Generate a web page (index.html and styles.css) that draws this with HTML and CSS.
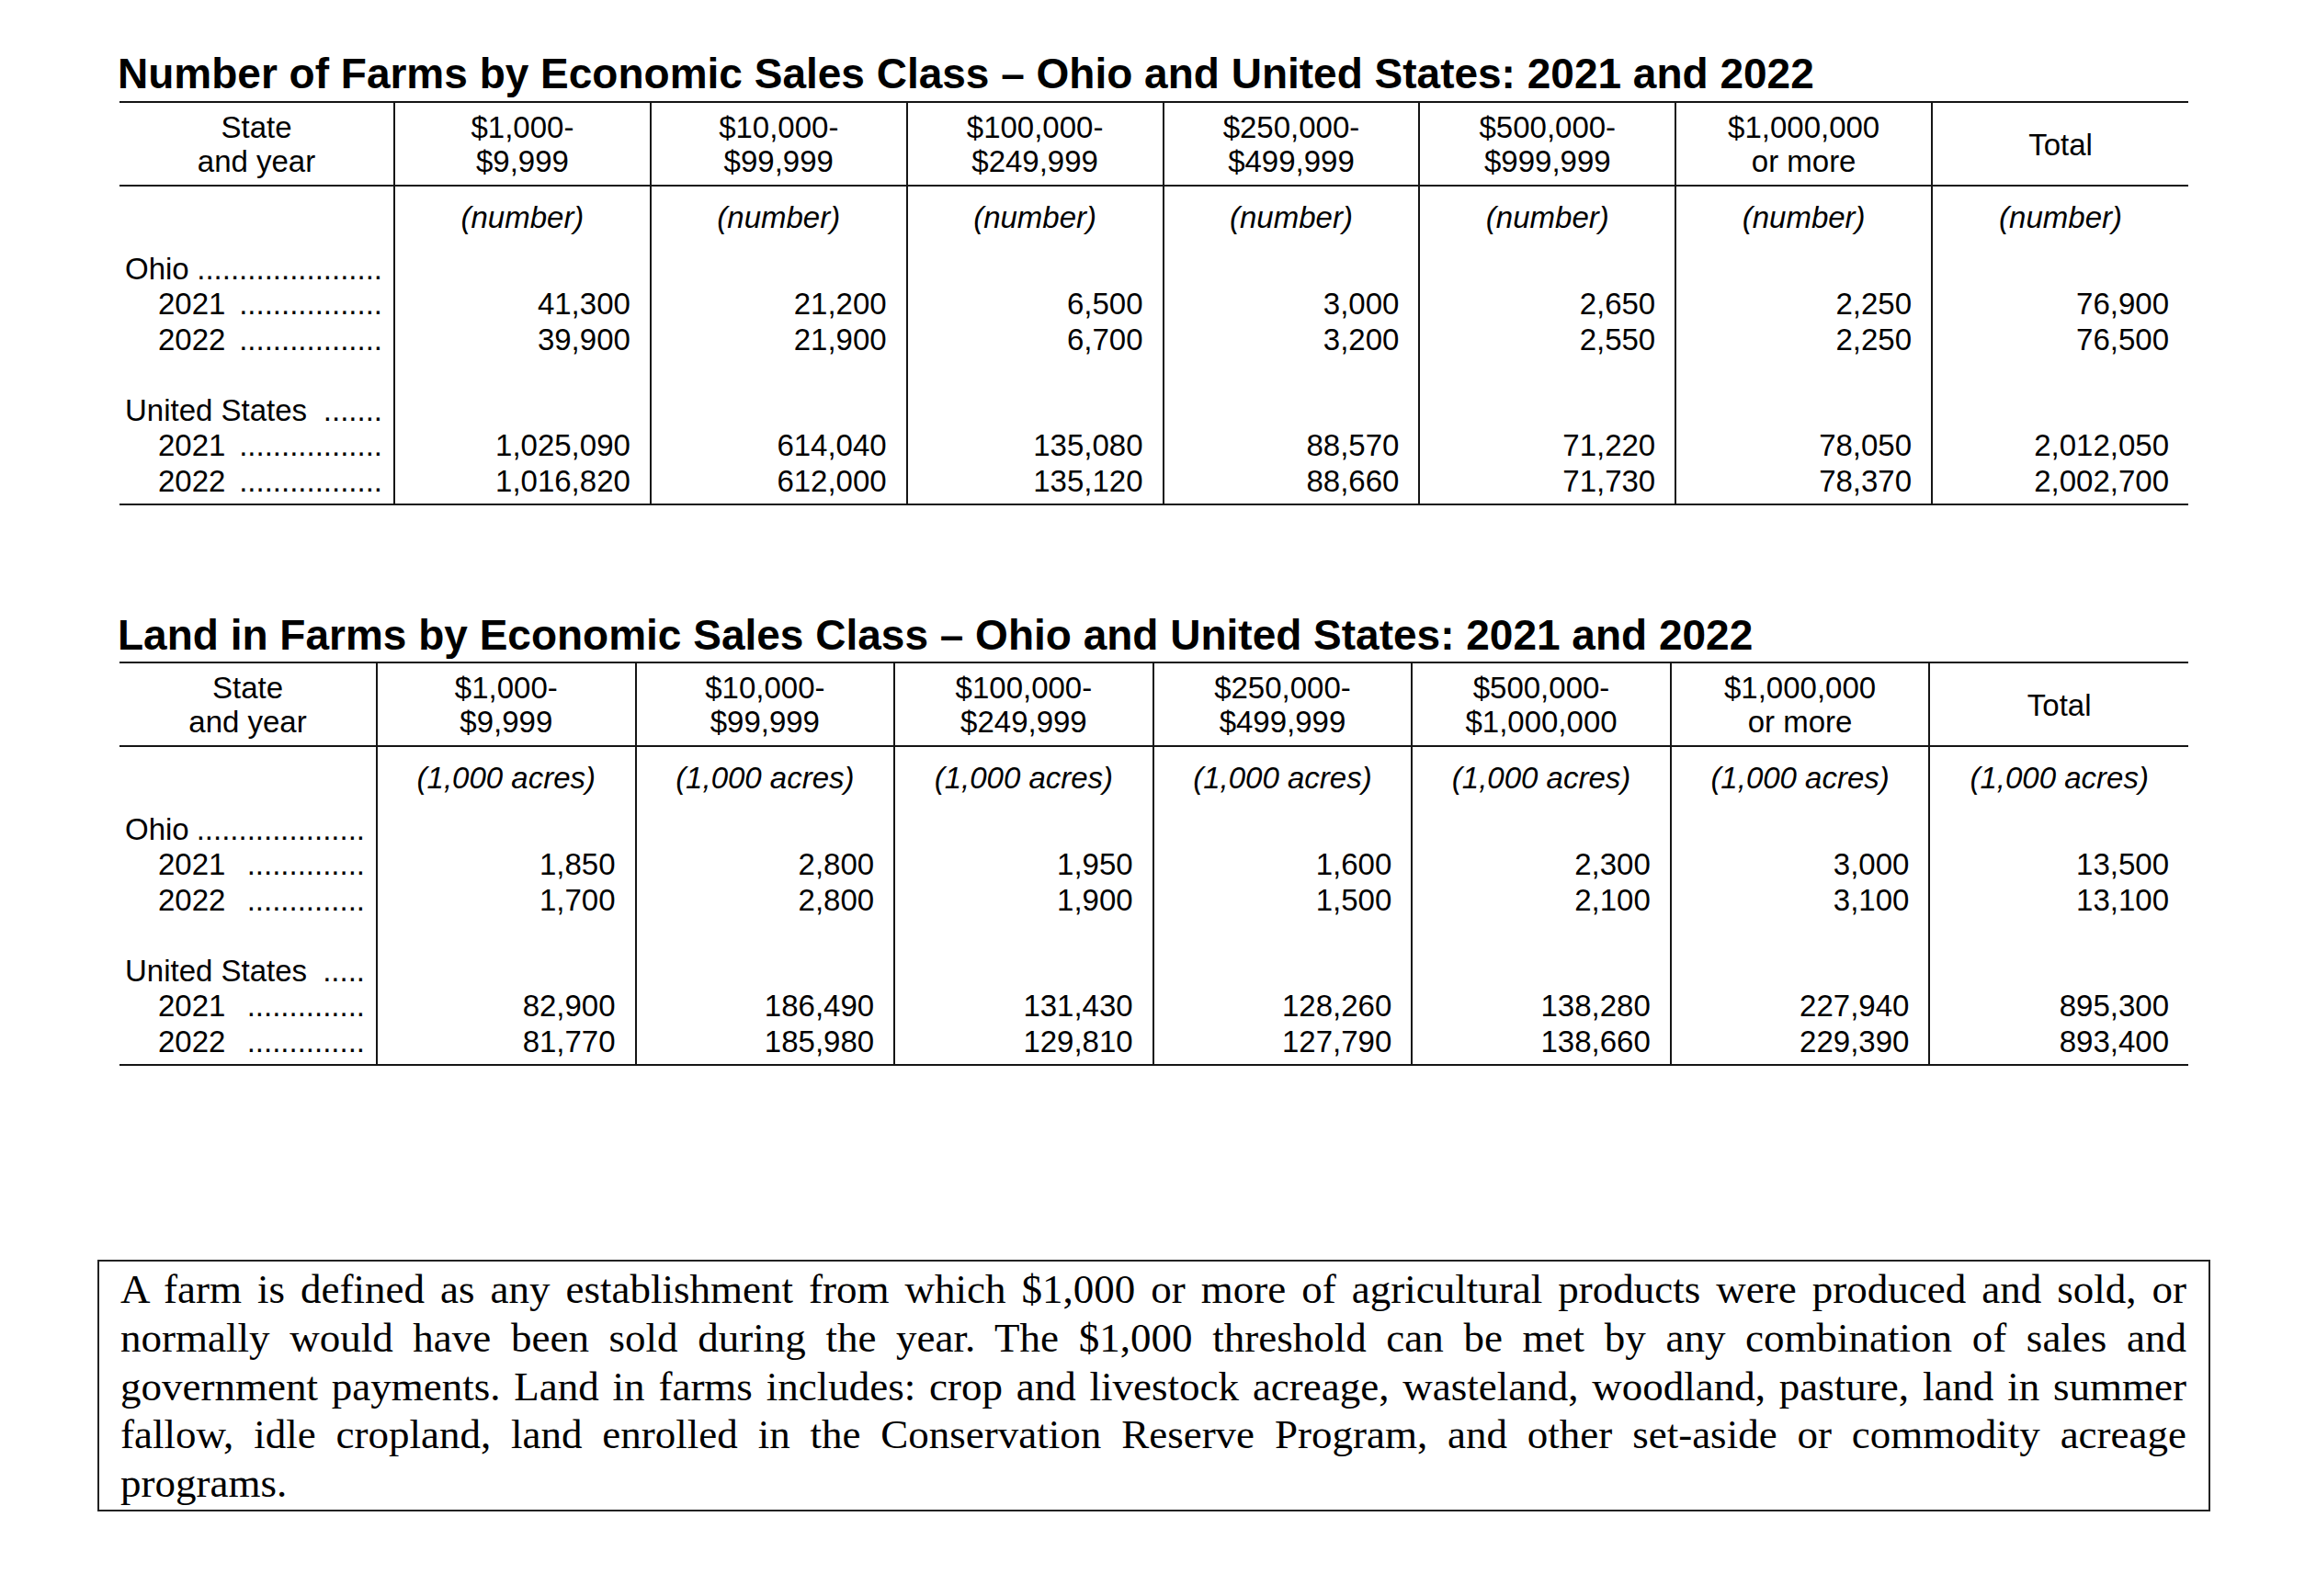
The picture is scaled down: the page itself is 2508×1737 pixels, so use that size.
FILE: index.html
```html
<!DOCTYPE html>
<html lang="en">
<head>
<meta charset="utf-8">
<title>Farms by Economic Sales Class – Ohio and United States</title>
<link rel="stylesheet" href="styles.css">
</head>
<body>
<main class="page">
  <h1 class="title">Number of Farms by Economic Sales Class – Ohio and United States: 2021 and 2022</h1>
  <table class="stats stats-farms">
    <colgroup><col class="col-label"><col><col><col><col><col><col><col></colgroup>
    <thead>
      <tr>
        <th>State<br>and year</th>
        <th>$1,000-<br>$9,999</th>
        <th>$10,000-<br>$99,999</th>
        <th>$100,000-<br>$249,999</th>
        <th>$250,000-<br>$499,999</th>
        <th>$500,000-<br>$999,999</th>
        <th>$1,000,000<br>or more</th>
        <th>Total</th>
      </tr>
    </thead>
    <tbody>
      <tr class="units"><td></td><td>(number)</td><td>(number)</td><td>(number)</td><td>(number)</td><td>(number)</td><td>(number)</td><td>(number)</td></tr>
      <tr><td class="lbl"><div class="lead"><span>Ohio</span><span class="dots">......................</span></div></td><td></td><td></td><td></td><td></td><td></td><td></td><td></td></tr>
      <tr><td class="lbl"><div class="lead yr"><span>2021</span><span class="dots">.................</span></div></td><td>41,300</td><td>21,200</td><td>6,500</td><td>3,000</td><td>2,650</td><td>2,250</td><td>76,900</td></tr>
      <tr><td class="lbl"><div class="lead yr"><span>2022</span><span class="dots">.................</span></div></td><td>39,900</td><td>21,900</td><td>6,700</td><td>3,200</td><td>2,550</td><td>2,250</td><td>76,500</td></tr>
      <tr><td></td><td></td><td></td><td></td><td></td><td></td><td></td><td></td></tr>
      <tr><td class="lbl"><div class="lead"><span>United States</span><span class="dots">.......</span></div></td><td></td><td></td><td></td><td></td><td></td><td></td><td></td></tr>
      <tr><td class="lbl"><div class="lead yr"><span>2021</span><span class="dots">.................</span></div></td><td>1,025,090</td><td>614,040</td><td>135,080</td><td>88,570</td><td>71,220</td><td>78,050</td><td>2,012,050</td></tr>
      <tr class="last"><td class="lbl"><div class="lead yr"><span>2022</span><span class="dots">.................</span></div></td><td>1,016,820</td><td>612,000</td><td>135,120</td><td>88,660</td><td>71,730</td><td>78,370</td><td>2,002,700</td></tr>
    </tbody>
  </table>

  <h1 class="title title-second">Land in Farms by Economic Sales Class – Ohio and United States: 2021 and 2022</h1>
  <table class="stats stats-land">
    <colgroup><col class="col-label"><col><col><col><col><col><col><col></colgroup>
    <thead>
      <tr>
        <th>State<br>and year</th>
        <th>$1,000-<br>$9,999</th>
        <th>$10,000-<br>$99,999</th>
        <th>$100,000-<br>$249,999</th>
        <th>$250,000-<br>$499,999</th>
        <th>$500,000-<br>$1,000,000</th>
        <th>$1,000,000<br>or more</th>
        <th>Total</th>
      </tr>
    </thead>
    <tbody>
      <tr class="units"><td></td><td>(1,000 acres)</td><td>(1,000 acres)</td><td>(1,000 acres)</td><td>(1,000 acres)</td><td>(1,000 acres)</td><td>(1,000 acres)</td><td>(1,000 acres)</td></tr>
      <tr><td class="lbl"><div class="lead"><span>Ohio</span><span class="dots">....................</span></div></td><td></td><td></td><td></td><td></td><td></td><td></td><td></td></tr>
      <tr><td class="lbl"><div class="lead yr"><span>2021</span><span class="dots">..............</span></div></td><td>1,850</td><td>2,800</td><td>1,950</td><td>1,600</td><td>2,300</td><td>3,000</td><td>13,500</td></tr>
      <tr><td class="lbl"><div class="lead yr"><span>2022</span><span class="dots">..............</span></div></td><td>1,700</td><td>2,800</td><td>1,900</td><td>1,500</td><td>2,100</td><td>3,100</td><td>13,100</td></tr>
      <tr><td></td><td></td><td></td><td></td><td></td><td></td><td></td><td></td></tr>
      <tr><td class="lbl"><div class="lead"><span>United States</span><span class="dots">.....</span></div></td><td></td><td></td><td></td><td></td><td></td><td></td><td></td></tr>
      <tr><td class="lbl"><div class="lead yr"><span>2021</span><span class="dots">..............</span></div></td><td>82,900</td><td>186,490</td><td>131,430</td><td>128,260</td><td>138,280</td><td>227,940</td><td>895,300</td></tr>
      <tr class="last"><td class="lbl"><div class="lead yr"><span>2022</span><span class="dots">..............</span></div></td><td>81,770</td><td>185,980</td><td>129,810</td><td>127,790</td><td>138,660</td><td>229,390</td><td>893,400</td></tr>
    </tbody>
  </table>

  <p class="note">A farm is defined as any establishment from which $1,000 or more of agricultural products were produced and sold, or normally would have been sold during the year. The $1,000 threshold can be met by any combination of sales and government payments. Land in farms includes: crop and livestock acreage, wasteland, woodland, pasture, land in summer fallow, idle cropland, land enrolled in the Conservation Reserve Program, and other set-aside or commodity acreage programs.</p>
</main>
</body>
</html>
```

FILE: styles.css
```css
html, body {
  margin: 0;
  padding: 0;
  background: #fff;
}

body {
  color: #000;
  font-family: "Liberation Sans", Arial, Helvetica, sans-serif;
}

.page {
  padding: 52px 0 0 130px;
}

.title {
  margin: 0 0 2px -2px;
  font-size: 46px;
  line-height: 56px;
  font-weight: 700;
  letter-spacing: 0;
}

.title-second {
  margin-top: 113px;
  margin-bottom: 1px;
}

.stats {
  width: 2251px;
  table-layout: fixed;
  border-collapse: collapse;
  border-top: 2px solid #151515;
  border-bottom: 2px solid #151515;
  font-size: 33px;
}

.stats-farms .col-label {
  width: 299px;
}

.stats-land .col-label {
  width: 280px;
}

.stats th {
  padding: 8px 0 7px;
  font-weight: 400;
  line-height: 37px;
  text-align: center;
  vertical-align: middle;
  border-bottom: 2px solid #151515;
}

.stats th + th,
.stats td + td {
  border-left: 2px solid #151515;
}

.stats td {
  height: 38.5px;
  padding: 0 21px 0 0;
  line-height: 38.5px;
  text-align: right;
  white-space: nowrap;
  vertical-align: middle;
}

.stats .units td {
  padding: 15px 0 17px;
  text-align: center;
  font-style: italic;
}

.stats .last td {
  padding-bottom: 5px;
}

.stats td.lbl {
  padding: 0 12px 0 6px;
  text-align: left;
}

.stats .last td.lbl {
  padding-bottom: 5px;
}

.lead {
  display: flex;
  align-items: baseline;
  justify-content: space-between;
  white-space: nowrap;
}

.lead.yr {
  padding-left: 36px;
}

.note {
  box-sizing: border-box;
  width: 2299px;
  margin: 211px 0 0 -24px;
  padding: 4px 24px 2px 23px;
  border: 2px solid #222;
  font-family: "Liberation Serif", "Times New Roman", serif;
  font-size: 45px;
  line-height: 52.8px;
  text-align: justify;
}
```
